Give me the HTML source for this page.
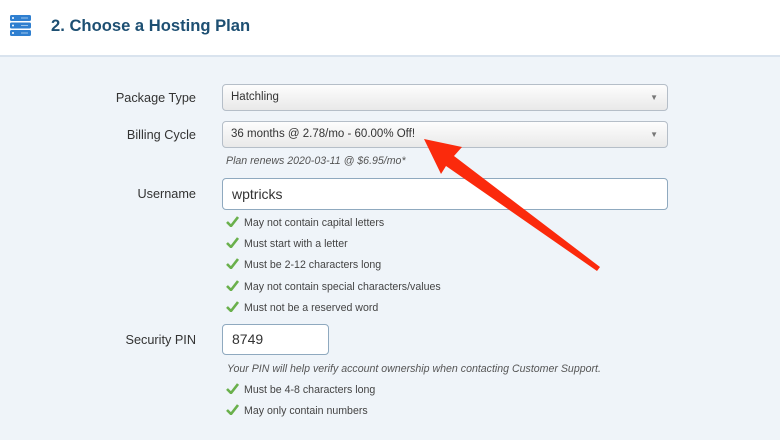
<!DOCTYPE html><html><head><style>
body{margin:0;width:780px;height:440px;background:#eff4f9;font-family:"Liberation Sans",Arial,sans-serif;position:relative;overflow:hidden}
.hdr{position:absolute;left:0;top:0;width:780px;height:55px;background:#fff;border-bottom:2px solid #d9e3ee}
.t{position:absolute;left:51px;top:16px;font-size:16.6px;font-weight:bold;color:#1d4f72}
.lbl{position:absolute;right:584px;font-size:12.7px;color:#333;text-align:right}
.sel{position:absolute;left:222px;width:444px;height:25px;border:1px solid #b5bec8;border-radius:4px;background:linear-gradient(#fdfdfd,#e9e9e9);font-size:11.5px;color:#333;line-height:25px;text-indent:8px}
.sel:after{content:"▼";position:absolute;right:9px;top:0;font-size:8px;color:#777}
.in{position:absolute;background:#fff;border:1px solid #8fa9bf;border-radius:4px;font-size:14px;color:#333;text-indent:9px}
.it{position:absolute;font-size:10.6px;font-style:italic;color:#555}
.ck{position:absolute;left:226px;font-size:10.6px;color:#444}
.ck svg{position:absolute;left:0;top:0}
.ck span{position:absolute;left:18px;top:1px;white-space:nowrap}
</style></head><body>
<div class="hdr">
<svg style="position:absolute;left:10px;top:15px" width="21" height="21" viewBox="0 0 21 21">
<rect x="0" y="0" width="21" height="6" rx="1.5" fill="#2f7fd0"/><rect x="0" y="7.5" width="21" height="6" rx="1.5" fill="#2f7fd0"/><rect x="0" y="15" width="21" height="6" rx="1.5" fill="#2f7fd0"/>
<circle cx="3" cy="3" r="1" fill="#fff"/><circle cx="3" cy="10.5" r="1" fill="#fff"/><circle cx="3" cy="18" r="1" fill="#fff"/>
<rect x="11" y="2.5" width="7" height="1" fill="#9cc4ea"/><rect x="11" y="10" width="7" height="1" fill="#9cc4ea"/><rect x="11" y="17.5" width="7" height="1" fill="#9cc4ea"/></svg>
<div class="t">2. Choose a Hosting Plan</div></div>
<div class="lbl" style="top:91px">Package Type</div>
<div class="sel" style="top:84px">Hatchling</div>
<div class="lbl" style="top:128px">Billing Cycle</div>
<div class="sel" style="top:121px">36 months @ 2.78/mo - 60.00% Off!</div>
<div class="it" style="left:226px;top:155px">Plan renews 2020-03-11 @ $6.95/mo*</div>
<div class="lbl" style="top:187px">Username</div>
<div class="in" style="left:222px;top:178px;width:444px;height:30px;line-height:30px">wptricks</div>
<div class="ck" style="top:216px"><svg width="13" height="11"><path d="M1 6l4 4 7-9" stroke="#6ab04c" stroke-width="2.6" fill="none"/></svg><span>May not contain capital letters</span></div>
<div class="ck" style="top:237px"><svg width="13" height="11"><path d="M1 6l4 4 7-9" stroke="#6ab04c" stroke-width="2.6" fill="none"/></svg><span>Must start with a letter</span></div>
<div class="ck" style="top:258px"><svg width="13" height="11"><path d="M1 6l4 4 7-9" stroke="#6ab04c" stroke-width="2.6" fill="none"/></svg><span>Must be 2-12 characters long</span></div>
<div class="ck" style="top:280px"><svg width="13" height="11"><path d="M1 6l4 4 7-9" stroke="#6ab04c" stroke-width="2.6" fill="none"/></svg><span>May not contain special characters/values</span></div>
<div class="ck" style="top:301px"><svg width="13" height="11"><path d="M1 6l4 4 7-9" stroke="#6ab04c" stroke-width="2.6" fill="none"/></svg><span>Must not be a reserved word</span></div>
<div class="lbl" style="top:333px">Security PIN</div>
<div class="in" style="left:222px;top:324px;width:105px;height:29px;line-height:29px">8749</div>
<div class="it" style="left:227px;top:363px">Your PIN will help verify account ownership when contacting Customer Support.</div>
<div class="ck" style="top:383px"><svg width="13" height="11"><path d="M1 6l4 4 7-9" stroke="#6ab04c" stroke-width="2.6" fill="none"/></svg><span>Must be 4-8 characters long</span></div>
<div class="ck" style="top:404px"><svg width="13" height="11"><path d="M1 6l4 4 7-9" stroke="#6ab04c" stroke-width="2.6" fill="none"/></svg><span>May only contain numbers</span></div>
<svg style="position:absolute;left:0;top:0" width="780" height="440"><path d="M424 139 L462 147 L454 156 L600 267 L597 271 L446 166 L441 174 Z" fill="#fb2a0c"/></svg>
</body></html>
